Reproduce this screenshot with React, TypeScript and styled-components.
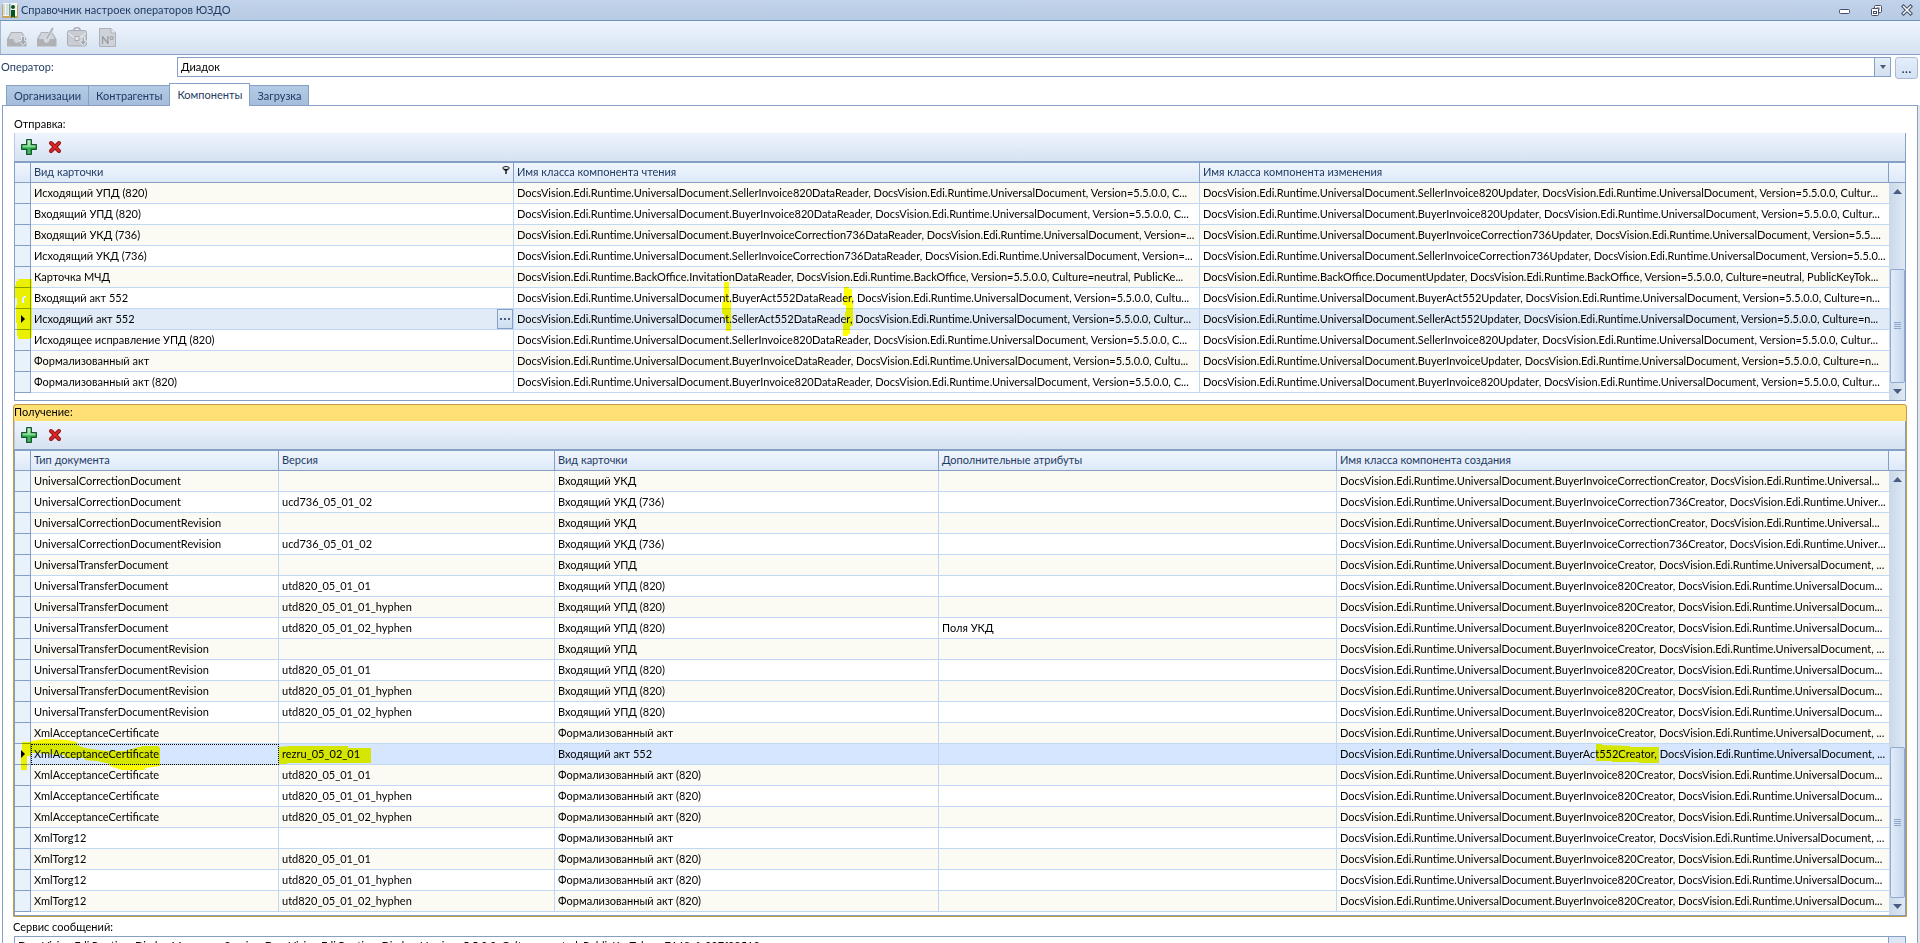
import React, { useState } from 'react';
import styled, { createGlobalStyle, css } from 'styled-components';

const color = {
  line: '#869fc4',
  cellLine: '#c1d7f3',
  ink: '#000000',
  head: '#1f3b63',
  cream: '#fbfaf3',
  gold: '#ffe074',
  goldLine: '#c39a45',
};

const GlobalStyle = createGlobalStyle`
  *, *::before, *::after { box-sizing: border-box; }
  html, body { margin: 0; height: 100%; overflow: hidden; background: #fff; }
  body, button, input, select, textarea {
    font-family: Tahoma, Lato, sans-serif;
    font-size: 11px;
    line-height: 14px;
    color: ${color.ink};
  }
  button { padding: 0; border: 0; background: none; }
`;

const Window = styled.div`
  display: flex;
  flex-direction: column;
  height: 100vh;
  overflow: hidden;
`;

const TitleBar = styled.header`
  display: flex;
  align-items: center;
  flex: none;
  height: 21px;
  padding: 0 5px 0 2px;
  border-bottom: 1px solid #6f92b8;
  background: linear-gradient(#c2d3ea, #b8cbe4);
`;

const Title = styled.h1`
  flex: 1;
  margin: 0 0 0 3px;
  font-size: 11px;
  font-weight: normal;
  line-height: 18px;
  color: ${color.head};
`;

const WindowControls = styled.div`
  display: flex;
  gap: 15px;
`;

const WindowButton = styled.button`
  display: grid;
  place-items: center;
  width: 16px;
  height: 18px;
`;

const bar = css`
  display: flex;
  align-items: center;
  background: linear-gradient(#eef5fe, #d6e2f1);
`;

const MainToolbar = styled.div`
  ${bar}
  flex: none;
  gap: 8px;
  height: 34px;
  padding: 0 5px;
  border-bottom: 1px solid ${color.line};
  border-left: 1px solid #a3b7d3;
`;

const ToolButton = styled.button`
  display: grid;
  place-items: center;
  width: 22px;
  height: 24px;
`;

const OperatorRow = styled.div`
  display: flex;
  align-items: flex-start;
  flex: none;
  height: 28px;
  padding: 2px 2px 0 1px;
`;

const FieldLabel = styled.label`
  width: 176px;
  line-height: 20px;
  color: ${color.head};
`;

const Combo = styled.div`
  position: relative;
  display: flex;
  flex: 1;
  height: 20px;
  border: 1px solid ${color.line};
`;

const ComboSelect = styled.select`
  flex: 1;
  padding: 0 20px 0 3px;
  border: 0;
  border-radius: 0;
  background: #fff;
  appearance: none;
  outline: 0;
`;

const ComboArrow = styled.span`
  position: absolute;
  top: 0;
  right: 0;
  bottom: 0;
  display: grid;
  place-items: center;
  width: 16px;
  border-left: 1px solid ${color.line};
  background: linear-gradient(#e6eff9, #d3e0f0);
  pointer-events: none;
`;

const BrowseButton = styled.button`
  width: 23px;
  height: 22px;
  margin-left: 4px;
  border: 1px solid #a9bbd8;
  border-radius: 3px;
  background: linear-gradient(#e4eefa, #d3e1f2);
  font-size: 14px;
  line-height: 20px;
  color: ${color.head};
`;

const Tabs = styled.div`
  display: flex;
  align-items: flex-end;
  flex: none;
  height: 22px;
  padding-left: 6px;
`;

const Tab = styled.button<{ $active: boolean }>`
  height: 20px;
  padding: 1px 7px 0;
  margin-right: -1px;
  border: 1px solid ${color.line};
  border-bottom: 0;
  background: linear-gradient(#b4cbe6, #a5bddb);
  color: ${color.head};
  ${(p) =>
    p.$active &&
    css`
      z-index: 1;
      height: 23px;
      padding-top: 0;
      margin-bottom: -1px;
      background: #fff;
    `}
`;

const TabPanel = styled.main`
  display: flex;
  flex-direction: column;
  flex: 1;
  min-height: 0;
  margin: 0 2px;
  padding: 10px 10px 0;
  border: 1px solid ${color.line};
  border-bottom: 0;
  box-shadow: 2px 0 0 #e3e5e8;
`;

const Section = styled.section<{ $focused?: boolean }>`
  position: relative;
  display: flex;
  flex-direction: column;
  flex: none;
  margin-top: ${(p) => (p.$focused ? 2 : 0)}px;
  border: 1px solid ${(p) => (p.$focused ? color.goldLine : 'transparent')};
  border-radius: 3px 3px 0 0;
  background: ${(p) => (p.$focused ? color.gold : 'transparent')};
`;

const SectionTitle = styled.h2`
  margin: 0;
  height: 16px;
  font-size: 11px;
  font-weight: normal;
  line-height: 14px;
`;

const GridToolbar = styled.div`
  ${bar}
  gap: 4px;
  height: 28px;
  padding-left: 3px;
  border-right: 1px solid ${color.line};
  border-left: 1px solid #b9cbe3;
`;

const GridFrame = styled.div`
  position: relative;
  display: flex;
  border: 1px solid ${color.line};
  border-top-width: 2px;
  background: #fff;
`;

const GridMain = styled.div<{ $tail: number }>`
  flex: 1;
  min-width: 0;
  padding-bottom: ${(p) => p.$tail}px;
`;

const Table = styled.table`
  width: 100%;
  table-layout: fixed;
  border-collapse: separate;
  border-spacing: 0;
`;

const HeadCell = styled.th`
  position: relative;
  height: 20px;
  padding: 0 3px 2px;
  border-right: 1px solid ${color.line};
  border-bottom: 1px solid ${color.line};
  background: linear-gradient(#f0f6fe, #dde9f8);
  font-weight: normal;
  line-height: 16px;
  text-align: left;
  color: ${color.head};
`;

const FilterMark = styled.span`
  position: absolute;
  top: 3px;
  right: 3px;
  line-height: 0;
`;

const Row = styled.tr<{ $tone: string }>`
  background: ${(p) => p.$tone};
`;

const Indicator = styled.td`
  height: 21px;
  padding: 0 0 0 5px;
  border-right: 1px solid ${color.line};
  border-bottom: 1px solid ${color.line};
  background: #e9f1fb;
  line-height: 0;
`;

const Cell = styled.td<{ $focus?: boolean }>`
  position: relative;
  height: 21px;
  padding: 0 0 0 3px;
  border-right: 1px solid ${color.cellLine};
  border-bottom: 1px solid ${color.cellLine};
  line-height: 20px;
  white-space: nowrap;
  overflow: hidden;
  ${(p) =>
    p.$focus &&
    css`
      outline: 1px dotted #000;
      outline-offset: -1px;
    `}
  &:last-child { border-right: 0; }
`;

const CellButton = styled.button`
  position: absolute;
  top: 0;
  right: 0;
  display: grid;
  place-items: center;
  width: 16px;
  height: 20px;
  border: 1px solid ${color.line};
  background: linear-gradient(#e3edf8, #cfdef0);
`;

const ScrollColumn = styled.div`
  display: flex;
  flex-direction: column;
  flex: none;
  width: 16px;
  background: linear-gradient(90deg, #c9d8ea, #dfe9f4);
`;

const ScrollCap = styled.div`
  height: 20px;
  border-bottom: 1px solid ${color.line};
  background: linear-gradient(#f0f6fe, #dde9f8);
`;

const ScrollButton = styled.button`
  display: grid;
  place-items: center;
  width: 16px;
  height: 17px;
`;

const ScrollTrack = styled.div<{ $before: number }>`
  display: flex;
  flex: 1;
  padding: ${(p) => p.$before}px 0 0 1px;
`;

const ScrollThumb = styled.div<{ $length: number }>`
  display: grid;
  place-items: center;
  width: 15px;
  height: ${(p) => p.$length}px;
  border: 1px solid #91aad0;
  border-radius: 2px;
  background: linear-gradient(90deg, #e2ecf8, #c7d8ee);
`;

const MarkerLayer = styled.svg`
  position: absolute;
  inset: 0;
  width: 100%;
  height: 100%;
  overflow: visible;
  mix-blend-mode: multiply;
  pointer-events: none;
`;

const ServiceLabel = styled.label`
  flex: none;
  line-height: 19px;
`;

const ServiceBox = styled.div`
  display: flex;
  flex: none;
  margin: 0 1px;
  border: 1px solid ${color.line};
`;

const ServiceInput = styled.input`
  flex: 1;
  height: 16px;
  padding: 0 3px;
  border: 0;
  outline: 0;
`;

const ServiceButton = styled.button`
  width: 17px;
  border-left: 1px solid ${color.line};
  background: #dbe7f5;
`;

const BookIcon = () => (
  <svg width="16" height="17" viewBox="0 0 16 17" aria-hidden="true">
    <path d="M0 3H2V14H14V3H16V16H0Z" fill="#c9a45a" />
    <path d="M1 1H6Q8 1 8 2.500Q8 1 10 1H15V14H1Z" fill="#f4f8f4" />
    <path d="M4 2H6.500V13H4Z" fill="#cfe0dc" />
    <path d="M7 2H8.500V14H7Z" fill="#7f9a9c" />
    <path d="M2 2V13" stroke="#a7bcbc" strokeWidth="1" />
    <circle cx="11" cy="5" r="2" fill="#0b4f1c" />
    <path d="M9 8H13V16L11 14.500L9 16Z" fill="#075419" />
  </svg>
);

const TrayIcon = ({ pen }: { pen?: boolean }) => (
  <svg width="22" height="22" viewBox="0 0 22 22" aria-hidden="true">
    <path d="M5 5H16L20.500 12V19.500H1V12Z" fill="#afb1b5" />
    <path d="M5.500 6H15.500L19 12H14Q13 16 10.500 16Q8 16 7.500 12H2.500Z" fill="#d0d5dc" />
    {pen ? (
      <path d="M16 0L18 1.500L12 12L9.500 13.500L10 10.500Z" fill="#afb1b5" stroke="#e2e9f2" strokeWidth=".7" />
    ) : (
      <path d="M15.500 9.500H18.500V13.500H21L17 18.500L13 13.500H15.500Z" fill="#a6a8ad" stroke="#dde4ec" />
    )}
  </svg>
);

const CaseIcon = () => (
  <svg width="22" height="22" viewBox="0 0 22 22" aria-hidden="true">
    <path d="M8 3V2.500Q8 .8 11 .8Q14 .8 14 2.500V3" fill="none" stroke="#a9acb1" strokeWidth="1.500" />
    <rect x="1.500" y="3.500" width="19" height="15.500" rx="2" fill="#c9cdd3" stroke="#a9acb1" />
    <path d="M2 6L9 11H13L20 6" fill="none" stroke="#eef2f6" />
    <rect x="9" y="9.500" width="4" height="4" fill="#e3e7ec" stroke="#a9acb1" />
    <path d="M16 10H18.500V14H21L17.200 18.500L13.500 14H16Z" fill="#a6a8ad" stroke="#e3e9f0" />
  </svg>
);

const NumberIcon = () => (
  <svg width="22" height="22" viewBox="0 0 22 22" aria-hidden="true">
    <path d="M3.500 1.500H15L19.500 6V19.500H3.500Z" fill="#ced3da" stroke="#adb0b5" />
    <path d="M15 1.500V6H19.500" fill="#e8edf3" stroke="#adb0b5" />
    <text x="5" y="17" fontSize="11" fontWeight="bold" fill="#999ca1">Nº</text>
  </svg>
);

const PlusIcon = () => (
  <svg width="16" height="16" viewBox="0 0 16 16" aria-hidden="true">
    <defs>
      <linearGradient id="plus" x2="0" y2="1">
        <stop offset="0" stopColor="#d2f7cf" />
        <stop offset=".5" stopColor="#7fdc8b" />
        <stop offset=".55" stopColor="#2eae4d" />
        <stop offset="1" stopColor="#4fc46c" />
      </linearGradient>
    </defs>
    <path d="M5.700 .7H10.300V5.700H15.300V10.300H10.300V15.300H5.700V10.300H.7V5.700H5.700Z" fill="url(#plus)" stroke="#12542c" strokeWidth="1.300" strokeLinejoin="round" />
  </svg>
);

const CrossIcon = () => (
  <svg width="14" height="14" viewBox="0 0 14 14" aria-hidden="true">
    <path d="M3 3L11 11M11 3L3 11" stroke="#8e1010" strokeWidth="4" strokeLinecap="round" />
    <path d="M3 3L11 11M11 3L3 11" stroke="#d92626" strokeWidth="2.400" strokeLinecap="round" />
  </svg>
);

const Triangle = ({ up }: { up?: boolean }) => (
  <svg width="9" height="5" viewBox="0 0 9 5" aria-hidden="true">
    <path d={up ? 'M0 5H9L4.500 0Z' : 'M0 0H9L4.500 5Z'} fill="#4a5b80" />
  </svg>
);

const RowArrow = () => (
  <svg width="6" height="8" viewBox="0 0 6 8" aria-hidden="true">
    <path d="M1 0L5 4L1 8Z" fill="#000" />
  </svg>
);

const Grip = () => (
  <svg width="7" height="8" viewBox="0 0 7 8" shapeRendering="crispEdges" aria-hidden="true">
    <path d="M0 .5H7M0 2.500H7M0 4.500H7M0 6.500H7" stroke="#8ba4cb" />
  </svg>
);

const Dots = () => (
  <svg width="10" height="2" viewBox="0 0 10 2" aria-hidden="true">
    <path d="M0 0H2V2H0ZM4 0H6V2H4ZM8 0H10V2H8Z" fill="#4a5b80" />
  </svg>
);

const NS = 'DocsVision.Edi.Runtime.UniversalDocument';
const BO = 'DocsVision.Edi.Runtime.BackOffice';
const V = 'Version=5.5.0.0';

const sendRows: string[][] = [
  ['Исходящий УПД (820)', `${NS}.SellerInvoice820DataReader, ${NS}, ${V}, C...`, `${NS}.SellerInvoice820Updater, ${NS}, ${V}, Cultur...`],
  ['Входящий УПД (820)', `${NS}.BuyerInvoice820DataReader, ${NS}, ${V}, C...`, `${NS}.BuyerInvoice820Updater, ${NS}, ${V}, Cultur...`],
  ['Входящий УКД (736)', `${NS}.BuyerInvoiceCorrection736DataReader, ${NS}, Version=...`, `${NS}.BuyerInvoiceCorrection736Updater, ${NS}, Version=5.5....`],
  ['Исходящий УКД (736)', `${NS}.SellerInvoiceCorrection736DataReader, ${NS}, Version=...`, `${NS}.SellerInvoiceCorrection736Updater, ${NS}, Version=5.5.0...`],
  ['Карточка МЧД', `${BO}.InvitationDataReader, ${BO}, ${V}, Culture=neutral, PublicKe...`, `${BO}.DocumentUpdater, ${BO}, ${V}, Culture=neutral, PublicKeyTok...`],
  ['Входящий акт 552', `${NS}.BuyerAct552DataReader, ${NS}, ${V}, Cultu...`, `${NS}.BuyerAct552Updater, ${NS}, ${V}, Culture=n...`],
  ['Исходящий акт 552', `${NS}.SellerAct552DataReader, ${NS}, ${V}, Cultur...`, `${NS}.SellerAct552Updater, ${NS}, ${V}, Culture=n...`],
  ['Исходящее исправление УПД (820)', `${NS}.SellerInvoice820DataReader, ${NS}, ${V}, C...`, `${NS}.SellerInvoice820Updater, ${NS}, ${V}, Cultur...`],
  ['Формализованный акт', `${NS}.BuyerInvoiceDataReader, ${NS}, ${V}, Cultu...`, `${NS}.BuyerInvoiceUpdater, ${NS}, ${V}, Culture=n...`],
  ['Формализованный акт (820)', `${NS}.BuyerInvoice820DataReader, ${NS}, ${V}, C...`, `${NS}.BuyerInvoice820Updater, ${NS}, ${V}, Cultur...`],
];

const correction = `${NS}.BuyerInvoiceCorrectionCreator, DocsVision.Edi.Runtime.Universal...`;
const correction736 = `${NS}.BuyerInvoiceCorrection736Creator, DocsVision.Edi.Runtime.Univer...`;
const invoice = `${NS}.BuyerInvoiceCreator, ${NS}, ...`;
const invoice820 = `${NS}.BuyerInvoice820Creator, DocsVision.Edi.Runtime.UniversalDocum...`;
const act552 = `${NS}.BuyerAct552Creator, ${NS}, ...`;

const receiveRows: string[][] = [
  ['UniversalCorrectionDocument', '', 'Входящий УКД', '', correction],
  ['UniversalCorrectionDocument', 'ucd736_05_01_02', 'Входящий УКД (736)', '', correction736],
  ['UniversalCorrectionDocumentRevision', '', 'Входящий УКД', '', correction],
  ['UniversalCorrectionDocumentRevision', 'ucd736_05_01_02', 'Входящий УКД (736)', '', correction736],
  ['UniversalTransferDocument', '', 'Входящий УПД', '', invoice],
  ['UniversalTransferDocument', 'utd820_05_01_01', 'Входящий УПД (820)', '', invoice820],
  ['UniversalTransferDocument', 'utd820_05_01_01_hyphen', 'Входящий УПД (820)', '', invoice820],
  ['UniversalTransferDocument', 'utd820_05_01_02_hyphen', 'Входящий УПД (820)', 'Поля УКД', invoice820],
  ['UniversalTransferDocumentRevision', '', 'Входящий УПД', '', invoice],
  ['UniversalTransferDocumentRevision', 'utd820_05_01_01', 'Входящий УПД (820)', '', invoice820],
  ['UniversalTransferDocumentRevision', 'utd820_05_01_01_hyphen', 'Входящий УПД (820)', '', invoice820],
  ['UniversalTransferDocumentRevision', 'utd820_05_01_02_hyphen', 'Входящий УПД (820)', '', invoice820],
  ['XmlAcceptanceCertificate', '', 'Формализованный акт', '', invoice],
  ['XmlAcceptanceCertificate', 'rezru_05_02_01', 'Входящий акт 552', '', act552],
  ['XmlAcceptanceCertificate', 'utd820_05_01_01', 'Формализованный акт (820)', '', invoice820],
  ['XmlAcceptanceCertificate', 'utd820_05_01_01_hyphen', 'Формализованный акт (820)', '', invoice820],
  ['XmlAcceptanceCertificate', 'utd820_05_01_02_hyphen', 'Формализованный акт (820)', '', invoice820],
  ['XmlTorg12', '', 'Формализованный акт', '', invoice],
  ['XmlTorg12', 'utd820_05_01_01', 'Формализованный акт (820)', '', invoice820],
  ['XmlTorg12', 'utd820_05_01_01_hyphen', 'Формализованный акт (820)', '', invoice820],
  ['XmlTorg12', 'utd820_05_01_02_hyphen', 'Формализованный акт (820)', '', invoice820],
];

type Column = { title: string; width?: number; filtered?: boolean };

type GridProps = {
  columns: Column[];
  rows: string[][];
  selected: number;
  selectedTone: string;
  focusedCell?: boolean;
  tail: number;
  thumb: { before: number; length: number };
  children?: React.ReactNode;
};

function Grid({ columns, rows, selected, selectedTone, focusedCell, tail, thumb, children }: GridProps) {
  return (
    <>
      <GridToolbar>
        <ToolButton aria-label="Добавить"><PlusIcon /></ToolButton>
        <ToolButton aria-label="Удалить"><CrossIcon /></ToolButton>
      </GridToolbar>
      <GridFrame>
        <GridMain $tail={tail}>
          <Table>
            <colgroup>
              <col width={16} />
              {columns.map((c) => <col key={c.title} width={c.width} />)}
            </colgroup>
            <thead>
              <tr>
                <HeadCell />
                {columns.map((c) => (
                  <HeadCell key={c.title} scope="col">
                    {c.title}
                    {c.filtered && (
                      <FilterMark>
                        <svg width="8" height="8" viewBox="0 0 8 8" aria-hidden="true">
                          <ellipse cx="4" cy="2" rx="3.300" ry="1.400" fill="#fff" stroke="#111" />
                          <path d="M1 3L3.300 5V8H4.700V5L7 3Z" fill="#111" />
                        </svg>
                      </FilterMark>
                    )}
                  </HeadCell>
                ))}
              </tr>
            </thead>
            <tbody>
              {rows.map((row, r) => (
                <Row key={r} $tone={r === selected ? selectedTone : r % 2 ? '#fff' : color.cream}>
                  <Indicator>{r === selected && <RowArrow />}</Indicator>
                  {row.map((text, c) => (
                    <Cell key={c} $focus={focusedCell && r === selected && c === 0}>
                      {text}
                      {!focusedCell && r === selected && c === 0 && (
                        <CellButton aria-label="Выбрать"><Dots /></CellButton>
                      )}
                    </Cell>
                  ))}
                </Row>
              ))}
            </tbody>
          </Table>
        </GridMain>
        <ScrollColumn>
          <ScrollCap />
          <ScrollButton aria-label="Вверх"><Triangle up /></ScrollButton>
          <ScrollTrack $before={thumb.before}>
            <ScrollThumb $length={thumb.length}><Grip /></ScrollThumb>
          </ScrollTrack>
          <ScrollButton aria-label="Вниз"><Triangle /></ScrollButton>
        </ScrollColumn>
        {children}
      </GridFrame>
    </>
  );
}

const tabs = ['Организации', 'Контрагенты', 'Компоненты', 'Загрузка'];

export default function App() {
  const [tab, setTab] = useState('Компоненты');
  return (
    <Window>
      <GlobalStyle />
      <TitleBar>
        <BookIcon />
        <Title>Справочник настроек операторов ЮЗДО</Title>
        <WindowControls>
          <WindowButton aria-label="Свернуть">
            <svg width="12" height="12" viewBox="0 0 12 12"><rect x=".5" y="5.500" width="10" height="4" rx="1" fill="#fff" stroke="#44506b" /></svg>
          </WindowButton>
          <WindowButton aria-label="Восстановить">
            <svg width="13" height="13" viewBox="0 0 13 13" fill="#fff" stroke="#44506b">
              <rect x="4.500" y="1.500" width="7" height="7" rx="1" /><rect x="7" y="4" width="2" height="2" />
              <rect x="1.500" y="4.500" width="7" height="7" rx="1" /><rect x="3.500" y="7.500" width="3" height="2" />
            </svg>
          </WindowButton>
          <WindowButton aria-label="Закрыть">
            <svg width="12" height="12" viewBox="0 0 12 12" strokeLinecap="square">
              <path d="M2.500 2.500L9.500 9.500M9.500 2.500L2.500 9.500" stroke="#44506b" strokeWidth="3.600" />
              <path d="M2.500 2.500L9.500 9.500M9.500 2.500L2.500 9.500" stroke="#fff" strokeWidth="1.500" />
            </svg>
          </WindowButton>
        </WindowControls>
      </TitleBar>
      <MainToolbar>
        <ToolButton aria-label="Получить"><TrayIcon /></ToolButton>
        <ToolButton aria-label="Изменить"><TrayIcon pen /></ToolButton>
        <ToolButton aria-label="Портфель"><CaseIcon /></ToolButton>
        <ToolButton aria-label="Нумератор"><NumberIcon /></ToolButton>
      </MainToolbar>
      <OperatorRow>
        <FieldLabel htmlFor="operator">Оператор:</FieldLabel>
        <Combo>
          <ComboSelect id="operator" defaultValue="Диадок"><option>Диадок</option></ComboSelect>
          <ComboArrow>
            <svg width="6" height="4" viewBox="0 0 6 4"><path d="M0 0H6L3 4Z" fill="#4a5b80" /></svg>
          </ComboArrow>
        </Combo>
        <BrowseButton>...</BrowseButton>
      </OperatorRow>
      <Tabs role="tablist">
        {tabs.map((t) => (
          <Tab key={t} role="tab" aria-selected={t === tab} $active={t === tab} onClick={() => setTab(t)}>{t}</Tab>
        ))}
      </Tabs>
      <TabPanel role="tabpanel">
        <Section>
          <SectionTitle>Отправка:</SectionTitle>
          <Grid
            columns={[
              { title: 'Вид карточки', width: 483, filtered: true },
              { title: 'Имя класса компонента чтения', width: 686 },
              { title: 'Имя класса компонента изменения' },
            ]}
            rows={sendRows}
            selected={6}
            selectedTone="#e1ebf7"
            tail={7}
            thumb={{ before: 69, length: 114 }}
          >
            <MarkerLayer aria-hidden="true">
              <g fill="#ffff00" fillRule="evenodd">
                <path d="M3 116H17V175H15V176H3V173H2V160H1V142H2V135H0V122H1V118H3ZM7 140V135L9 133H11V135H9V140Z" />
                <path d="M709 119H714V138H716V168H711V156H709V151H707V139H709Z" />
                <path d="M829 124H834V126H837V134H838V163H835V171H833V173H828V160H830V149H831V142H828V135H829Z" />
              </g>
            </MarkerLayer>
          </Grid>
        </Section>
        <Section $focused>
          <SectionTitle>Получение:</SectionTitle>
          <Grid
            columns={[
              { title: 'Тип документа', width: 248 },
              { title: 'Версия', width: 276 },
              { title: 'Вид карточки', width: 384 },
              { title: 'Дополнительные атрибуты', width: 398 },
              { title: 'Имя класса компонента создания' },
            ]}
            rows={receiveRows}
            selected={13}
            selectedTone="#d5e6fe"
            focusedCell
            tail={3}
            thumb={{ before: 259, length: 151 }}
          >
            <MarkerLayer aria-hidden="true">
              <g fill="#ffff00">
                <path d="M7 291H16V290L30 288L52 289L62 291V294L70 297L90 300H109L128 295H143L145 297V315L130 317V319H107L95 315V313L82 310L70 309V307L50 307V304L31 303L22 302H16V305H12V319H6V301H7Z" />
                <path d="M264 296L275 295H333V297H356V312H272V313H264Z" />
              </g>
              <svg x="100%" overflow="visible">
                <path d="M-309 293H-303V294L-275 295V296H-246V312H-266V311H-293V310H-309Z" fill="#ffff00" />
              </svg>
            </MarkerLayer>
          </Grid>
        </Section>
        <ServiceLabel htmlFor="service">Сервис сообщений:</ServiceLabel>
        <ServiceBox>
          <ServiceInput
            id="service"
            defaultValue="DocsVision.Edi.Runtime.Diadoc.MessengerService, DocsVision.Edi.Runtime.Diadoc, Version=5.5.0.0, Culture=neutral, PublicKeyToken=7148afe997f90519"
          />
          <ServiceButton aria-label="Выбрать сервис" />
        </ServiceBox>
      </TabPanel>
    </Window>
  );
}
